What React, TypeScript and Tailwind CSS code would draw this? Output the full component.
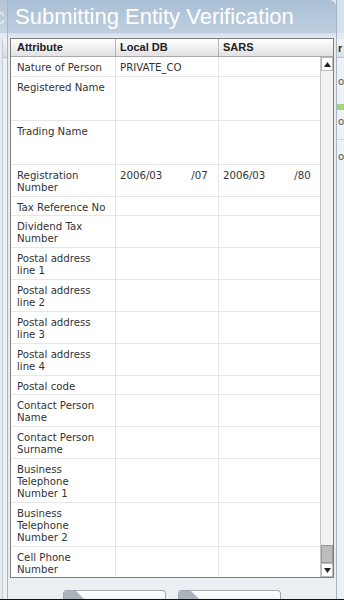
import React from 'react'

type Row = {
  label: string[]
  h: string
  local?: React.ReactNode
  sars?: React.ReactNode
}

const RegNo: React.FC<{ tail: string }> = ({ tail }) => (
  <div className="flex">
    <span>2006/03</span>
    <span className="ml-[29px]">{tail}</span>
  </div>
)

const rows: Row[] = [
  { label: ['Nature of Person'], h: 'h-[20px]', local: 'PRIVATE_CO' },
  { label: ['Registered Name'], h: 'h-[44px]' },
  { label: ['Trading Name'], h: 'h-[44px]' },
  { label: ['Registration', 'Number'], h: 'h-[32px]', local: <RegNo tail="/07" />, sars: <RegNo tail="/80" /> },
  { label: ['Tax Reference No'], h: 'h-[19px]' },
  { label: ['Dividend Tax', 'Number'], h: 'h-[32px]' },
  { label: ['Postal address', 'line 1'], h: 'h-[32px]' },
  { label: ['Postal address', 'line 2'], h: 'h-[32px]' },
  { label: ['Postal address', 'line 3'], h: 'h-[32px]' },
  { label: ['Postal address', 'line 4'], h: 'h-[32px]' },
  { label: ['Postal code'], h: 'h-[19px]' },
  { label: ['Contact Person', 'Name'], h: 'h-[32px]' },
  { label: ['Contact Person', 'Surname'], h: 'h-[32px]' },
  { label: ['Business', 'Telephone', 'Number 1'], h: 'h-[44px]' },
  { label: ['Business', 'Telephone', 'Number 2'], h: 'h-[44px]' },
  { label: ['Cell Phone', 'Number'], h: 'h-[32px]' },
]

const Arrow: React.FC<{ down?: boolean }> = ({ down }) => (
  <div className="h-[14px] bg-white border border-[#b9b9b9] flex items-center justify-center">
    <svg width="7" height="5" viewBox="0 0 7 5">
      {down ? <polygon points="0,0 7,0 3.5,5" fill="#222" /> : <polygon points="0,5 7,5 3.5,0" fill="#222" />}
    </svg>
  </div>
)

const DialogButton = () => (
  <div className="w-[103px] h-[9px] rounded-t-[4px] border border-b-0 border-[#9ea8b2] bg-gradient-to-b from-white to-[#f1f3f5] flex overflow-hidden">
    <svg width="24" height="9" viewBox="0 0 24 9">
      <polygon points="0,0 12,0 21,9 0,9" fill="#aab2ba" />
    </svg>
  </div>
)

export default function App() {
  return (
    <div className="w-[344px] h-[600px] overflow-hidden flex flex-col bg-[#e6ebf0] font-['DejaVu_Sans',sans-serif]">
      <div className="flex h-[599px]">
        {/* page behind, left */}
        <div className="w-[7px] flex flex-col overflow-hidden">
          <div className="h-[33px] bg-gradient-to-b from-[#b2c4d6] to-[#c6d4e2] overflow-hidden">
            <div className="-ml-[6px] text-[22px] leading-[33px] text-[#e4ebf2] font-['Liberation_Sans',Arial,sans-serif]">c</div>
          </div>
          <div className="h-[6px] bg-[#e3e9ef]" />
          <div className="flex-1 flex">
            <div className="w-[2px]" />
            <div className="flex-1 border-l border-[#c4cad0] flex flex-col">
              <div className="h-[19px] bg-gradient-to-b from-[#f2f2f2] to-[#d9dcdf] border-b border-[#c0c4c8]" />
              <div className="flex-1 bg-[#eef1f4]" />
            </div>
          </div>
        </div>

        {/* dialog */}
        <div className="w-[330px] flex flex-col border-x border-[#a6b6c6] bg-[#e7ecf1]">
          <div className="h-[33px] bg-gradient-to-b from-[#a9bfd5] to-[#bfcfe0] pl-[7px] rounded-tr-[6px]">
            <div className="text-[22px] leading-[33px] text-white font-['Liberation_Sans',Arial,sans-serif]">
              Submitting Entity Verification
            </div>
          </div>
          <div className="h-[6px] bg-gradient-to-b from-[#d3dde8] to-[#e3e9ef]" />

          <div className="px-[2px]">
            <div className="border border-[#7d7d7d] bg-white">
              {/* header */}
              <div className="flex h-[18px] border-b border-[#a9a9a9] bg-gradient-to-b from-white to-[#e2e2e2] text-[11px] leading-[17px] font-bold text-[#222] font-['Liberation_Sans',Arial,sans-serif]">
                <div className="w-[105px] border-r border-[#b4b4b4] pl-[6px]">Attribute</div>
                <div className="w-[103px] border-r border-[#b4b4b4] pl-[4px]">Local DB</div>
                <div className="flex-1 pl-[4px]">SARS</div>
              </div>

              {/* body */}
              <div className="flex h-[520px]">
                <div className="flex-1 overflow-hidden text-[10.2px] leading-[12px] text-[#333]">
                  {rows.map((r, i) => (
                    <div key={i} className={`flex ${r.h} shrink-0 border-b border-[#e6e6e6]`}>
                      <div className="w-[105px] border-r border-[#e6e6e6] pl-[6px] pt-[5px] whitespace-nowrap">
                        {r.label.map((l, j) => (
                          <React.Fragment key={j}>
                            {j > 0 && <br />}
                            {l}
                          </React.Fragment>
                        ))}
                      </div>
                      <div className="w-[103px] border-r border-[#e6e6e6] pl-[4px] pt-[5px] whitespace-nowrap overflow-hidden">
                        {r.local}
                      </div>
                      <div className="flex-1 pl-[4px] pt-[5px] whitespace-nowrap overflow-hidden">{r.sars}</div>
                    </div>
                  ))}
                </div>

                {/* scrollbar */}
                <div className="w-[13px] border-l border-[#c6c6c6] bg-[#f3f3f3] flex flex-col">
                  <Arrow />
                  <div className="flex-1 flex flex-col justify-end">
                    <div className="h-[18px] bg-[#bdbdbd] border border-[#9a9a9a]" />
                  </div>
                  <Arrow down />
                </div>
              </div>
            </div>
          </div>

          {/* footer */}
          <div className="flex-1 bg-[#eceff2] pt-[12px] pl-[55px] flex gap-[12px]">
            <DialogButton />
            <DialogButton />
          </div>
        </div>

        {/* page behind, right */}
        <div className="w-[7px] flex flex-col overflow-hidden text-[10.2px] leading-[12px] text-[#555]">
          <div className="h-[33px] bg-[#d6e0ea]" />
          <div className="h-[6px] bg-[#e6ebf0]" />
          <div className="h-[19px] bg-gradient-to-b from-[#f4f4f4] to-[#dcdfe2] border-b border-[#c0c4c8] pl-[1px] font-bold text-[#333] text-[11px] leading-[18px] font-['Liberation_Sans',Arial,sans-serif]">
            r
          </div>
          <div className="flex-1 bg-[#eef1f4] flex flex-col">
            <div className="h-[18px]" />
            <div className="pl-[1px]">o</div>
            <div className="h-[16px]" />
            <div className="h-[6px] bg-[#a6d477]" />
            <div className="h-[6px]" />
            <div className="pl-[1px]">o</div>
            <div className="h-[12px] border-b border-[#d0d4d8]" />
            <div className="h-[11px]" />
            <div className="pl-[1px]">o</div>
          </div>
        </div>
      </div>
      <div className="h-[1px] bg-[#111]" />
    </div>
  )
}
